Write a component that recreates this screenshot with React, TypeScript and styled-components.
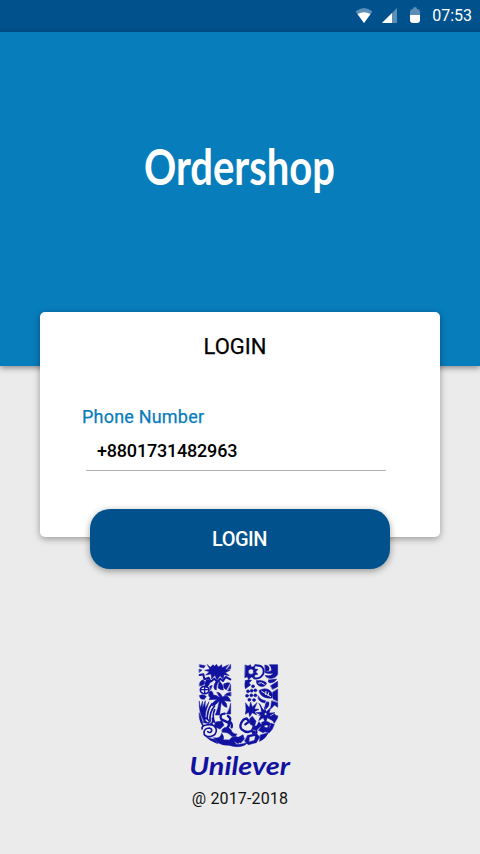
import React from "react";
import styled, { createGlobalStyle } from "styled-components";

const GlobalStyle = createGlobalStyle`
  *, *::before, *::after { box-sizing: border-box; }
  body { margin: 0; background: #ebebeb; font-family: Roboto, "Noto Sans", sans-serif; }
`;

const Screen = styled.main`
  display: flex;
  flex-direction: column;
  align-items: center;
  width: 480px;
  height: 854px;
  overflow: hidden;
  background: #ebebeb;
`;

const StatusBar = styled.div`
  display: flex;
  align-items: center;
  justify-content: flex-end;
  width: 100%;
  height: 32px;
  flex: none;
  padding-right: 8px;
  background: #00518c;
  color: #fff;
`;

const StatusIcons = styled.svg`
  width: 66px;
  height: 20px;
  margin-right: 11px;
`;

const Clock = styled.span`
  font-size: 16px;
  line-height: 32px;
`;

const Hero = styled.header`
  display: flex;
  justify-content: center;
  width: 100%;
  height: 334px;
  flex: none;
  padding-top: 106px;
  background: #077dbc;
  box-shadow: 0 2px 6px rgba(0, 0, 0, 0.42);
`;

const Wordmark = styled.svg`
  display: block;
  width: 200px;
  height: 66px;
  flex: none;
  overflow: visible;
`;

const Card = styled.section`
  position: relative;
  display: flex;
  flex-direction: column;
  width: 400px;
  height: 225px;
  flex: none;
  margin-top: -54px;
  border-radius: 5px;
  background: #fff;
  box-shadow: 0 2px 7px rgba(0, 0, 0, 0.36);
`;

const Title = styled.h1`
  margin: 21px 10px 0 0;
  text-align: center;
  font-size: 22px;
  line-height: 28px;
  font-weight: 400;
  color: #000;
  -webkit-text-stroke: 0.25px #000;
`;

const Label = styled.label`
  margin: 44px 0 0 42px;
  font-size: 18px;
  line-height: 24px;
  letter-spacing: 0.2px;
  color: #077dbc;
  -webkit-text-stroke: 0.25px #077dbc;
`;

const PhoneInput = styled.input`
  width: 300px;
  height: 42px;
  margin-left: 46px;
  padding: 1px 11px 0;
  border: 0;
  border-bottom: 1px solid #b0b0b0;
  outline: 0;
  background: transparent;
  color: #000;
  font: 500 18px/24px Roboto, sans-serif;
  letter-spacing: -0.2px;
`;

const LoginButton = styled.button`
  position: relative;
  width: 300px;
  height: 60px;
  flex: none;
  margin-top: -28px;
  padding: 0 2px 0 0;
  border: 0;
  border-radius: 20px;
  background: #00518c;
  color: #fff;
  font: 500 20px/60px Roboto, sans-serif;
  letter-spacing: -0.5px;
  text-indent: 1px;
  box-shadow: 0 2px 7px rgba(0, 0, 0, 0.38);
`;

const Footer = styled.footer`
  display: flex;
  flex-direction: column;
  align-items: center;
  margin-top: 86px;
`;

const Brand = styled.svg`
  display: block;
  width: 110px;
  height: 120px;
  overflow: visible;
`;

const Copyright = styled.p`
  margin: 13px 0 0;
  font-size: 16px;
  line-height: 22px;
  letter-spacing: 0.15px;
  color: #111;
`;

function Emblem() {
  return (
    <g fill="#1212a0" stroke="#1212a0" strokeWidth="1.5" strokeLinejoin="round" strokeLinecap="round">
      {/* sun and sparks */}
      <path d="M44 29l17 3-5 7-12-3zM67 29l9 8 8-8 5 5 5-6 6 8 10-7 1 9 20-9-10 13 15 3-15 8 12 9-16-3-2 14-10-11-9 14-6-15-10 11-2-15-16 3 11-10-14-4 15-3z" />
      <path d="M137 29v12l-10 1zM43 43l8 2-8 7z" />
      <path d="M44 60l11-2 3 15 13-5 6 12 11-9 9 10 9-10 8 7 8-12 14 7" fill="none" strokeWidth="6" />
      {/* bees, shells and leaves */}
      <path d="M44 84q8-15 14-5t-14 14zM60 87q2-18 11-13t-1 18-10-5zM87 96q0-18 14-18-8 16-7 27-7 0-7-9zM104 79q11 9 11 26-13 0-16-8 2-13 5-18zM117 87q9-6 18-3l-11 20q-12-5-7-17zM137 89v19h-8z" />
      <ellipse cx="59" cy="105" rx="13" ry="11" fill="none" strokeWidth="5" />
      <path d="M48 104h22M59 96v18" fill="none" strokeWidth="4" />
      <path d="M74 94l8-3-5 13zM72 112q8-10 12 3t-7 14q-9-5-5-17zM44 121q10-5 20 3l-6 9q-12 1-14-7z" />
      {/* palm tree */}
      <path d="M105 129q-22-20-33 5l26-1q-18 8-17 20 12-2 22-16-3 22-12 43h13q2-22 5-39 5 15 17 16 0-15-10-20l21 2q-7-23-25-13-5-14-16-14z" />
      <path d="M137 112q-13 1-19 9l19 2zM137 146v31h-13q9-11 13-31z" />
      {/* hand and flowing hair */}
      <path d="M43 139l3 19 7-20-1 22 9-23-1 23 12-20-9 28-4 29q-14-12-16-43z" />
      <path d="M81 146q-16 20-14 50M89 153q-16 17-14 47M82 190q4 14-5 17M89 164q-8 17-1 37" fill="none" strokeWidth="5" />
      {/* crescent and birds */}
      <path d="M181 30l8 3 7-4 4 8 10-5-1 10 10 1-7 8 7 7-10 2-1 10-9-4-8 8-4-9-7 3z" />
      <circle cx="198" cy="50" r="8" fill="#ebebeb" />
      <path d="M211 31q30 0 24 25-8 17-27 14" fill="none" strokeWidth="6" />
      <path d="M240 30q15 1 12 16l-10 4q11 2 18-4-1-12-7-17h25v29q-7 14-25 12-10-1-13-9 21 4 24-7-12 4-23-1z" />
      <path d="M181 77q10-5 19-1l-8 8 5 6-16 11q-3-12 0-24zM215 77q22-3 30 8-7 15-23 7-10-5-7-15zM251 75l24-3q-5 11-20 12-9-3-4-9zM257 92l21-13v16l-15 8z" />
      <path d="M221 84q9-4 17 4" stroke="#ebebeb" strokeWidth="3" fill="none" />
      {/* berries */}
      {[[204, 94], [189, 109], [200, 107], [211, 106], [186, 122], [199, 121], [211, 121], [193, 134], [207, 135]].map(([x, y]) => (
        <circle key={`${x}-${y}`} cx={x} cy={y} r="4.5" />
      ))}
      {/* leaf, blossom and heart */}
      <path d="M223 106q22-12 36 5 6 7 2 18-28 4-38-17zM278 103v36l-14-7-1-20z" />
      <path d="M230 109l27 16M243 109l-1 10M251 113l-2 9" stroke="#ebebeb" strokeWidth="3" />
      <path d="M220 123q7 13 22 14l-3 7q-13-2-19-12zM244 141q-7 14-1 21 11-8 9-20zM260 138l-4 25 13-13 9 7v-14z" />
      <path d="M182 144l11 14 4-17 5 15 14-13-8 19 14 1-13 7 6 10-13-7-8 12-3-13-10 6 2-14zM221 145q10 5 10 22M240 168q-8 13-19 14M255 166l-9 17" />
      <path d="M238 156l6 14 12-11-4 15 18-1-15 8 8 16-16-9-6 17-6-17-14 9 7-17-15-7 17-2-2-14 11 10z" />
      <circle cx="242" cy="177" r="4" fill="#ebebeb" />
      <path d="M263 181q6-8 10 1 8-3 4 8l-9 15-10-15q-3-8 5-9z" />
      {/* dove, spiral and sweeping lower motifs */}
      <path d="M43 174q8 15 12 40-9-8-12-26zM54 186q15-1 20 14l-2 6-16-3zM91 201l20-3 6 13-12 11-17-7z" />
      <path d="M63 195l6 5" stroke="#ebebeb" strokeWidth="4" />
      <path d="M51 222q-1-10 12-12 27-5 31 14 1 17-18 21-20 0-19-13 1-12 16-13 10 3 6 11-5 5-11 0" fill="none" strokeWidth="5" />
      <path d="M119 176q-18 1-10 17l21 10q5 7-2 14M129 183q12 9 3 16 11 6 8 18" fill="none" strokeWidth="7" />
      <path d="M111 224q13-14 27 0 5 14 18 13-3 10-16 7-10-14-28-12zM86 248q20 5 24-13 8 8 5 20 26-3 40 13-35 8-57-5zM58 240q16 13 31 13l9 13q-25-8-40-26zM134 253q12-13 26-6v19q-9-7-22-7zM160 247l14-8 4 13-11 12-11-3z" />
      <path d="M175 194q-15 18-5 29 20 17 36-1M177 193l8-3 7 10-11 8" fill="none" strokeWidth="7" />
      <path d="M194 191l8-7 11 15-5 16-13-8zM203 215l12-3 7-12 8 11-14 13 1 11-14 3q-7-12 0-23zM231 202q13-8 25 3l-6 20-16 8-14-7q9-8 11-24zM258 205l10 3q-4 16-15 25l-12-2q14-8 17-26zM188 241l27-5 9 10-10 17-24 6-11-10zM226 240l24-7q-8 18-26 26z" />
      <ellipse cx="244" cy="214" rx="6" ry="4" fill="#ebebeb" />
      <path d="M195 247l15-3-3 11-13 4zM204 225l8 3" fill="#ebebeb" stroke="#ebebeb" />
      <path d="M118 258q29 18 69 5-8 12-32 12-27-1-37-17z" />
    </g>
  );
}

export default function App() {
  return (
    <>
      <GlobalStyle />
      <Screen>
        <StatusBar>
          <StatusIcons viewBox="0 0 66 20">
            <path d="M0.5 5.5q8.5-7 17 0L9 17z" fill="#5b8fb8" />
            <path d="M2.500 8q6.500-3.500 13 0L9 17z" fill="#fff" />
            <path d="M42 2v15H27z" fill="#5b8fb8" />
            <path d="M37 7v10H27z" fill="#fff" />
            <path d="M55 6q0-3 3-3 0-2 2-2t2 2q3 0 3 3v5H55z" fill="#5b8fb8" />
            <path d="M55 9h10v5q0 3-3 3h-4q-3 0-3-3z" fill="#fff" />
          </StatusIcons>
          <Clock>07:53</Clock>
        </StatusBar>
        <Hero>
          <Wordmark viewBox="0 0 200 66" role="img" aria-label="Ordershop">
            <text x="4" y="47" fill="#fff" fontFamily="Lato" fontWeight="700" fontSize="49" textLength="191" lengthAdjust="spacingAndGlyphs">Ordershop</text>
          </Wordmark>
        </Hero>
        <Card>
          <Title>LOGIN</Title>
          <Label htmlFor="phone">Phone Number</Label>
          <PhoneInput id="phone" type="tel" defaultValue="+8801731482963" />
        </Card>
        <LoginButton>LOGIN</LoginButton>
        <Footer>
          <Brand viewBox="0 0 330 360" role="img" aria-label="Unilever">
            <Emblem />
            <text x="13" y="360" fill="#1212a0" fontFamily="Lato" fontStyle="italic" fontWeight="700" fontSize="73" textLength="302" lengthAdjust="spacingAndGlyphs">Unilever</text>
          </Brand>
          <Copyright>@ 2017-2018</Copyright>
        </Footer>
      </Screen>
    </>
  );
}
